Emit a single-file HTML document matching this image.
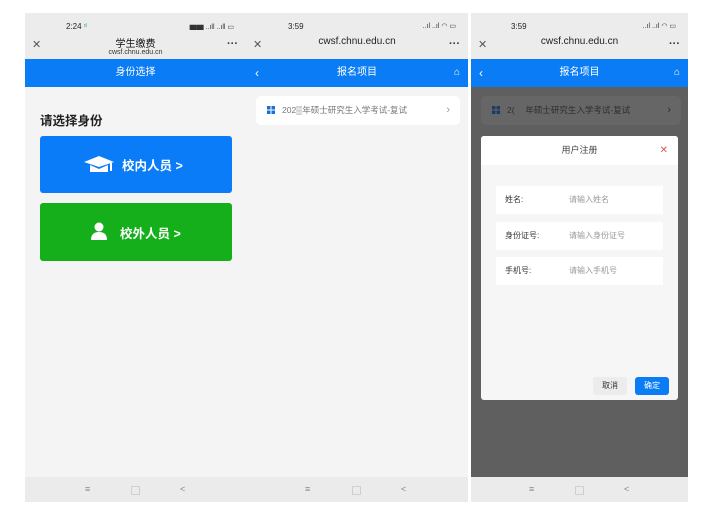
<!DOCTYPE html>
<html><head><meta charset="utf-8"><style>
*{margin:0;padding:0;box-sizing:border-box}
body{width:703px;height:510px;background:#fff;position:relative;overflow:hidden;font-family:"Liberation Sans","Noto Sans CJK SC",sans-serif}
.p{position:absolute;top:13px;height:489px;background:#f4f4f4;overflow:hidden}
.hd{position:absolute;left:0;right:0;top:0;height:46px;background:#ececec}
.tm{position:absolute;top:9px;font-size:8px;color:#222}
.sig{position:absolute;top:9px;font-size:7px;color:#333;letter-spacing:0}
.x{position:absolute;left:7px;top:27px;font-size:11px;color:#555;line-height:1}
.dots{position:absolute;right:8px;top:25px;font-size:11px;color:#333;font-weight:bold;letter-spacing:0}
.url{position:absolute;left:0;right:0;text-align:center;top:23px;font-size:10px;color:#222}
.bar{position:absolute;left:0;right:0;top:46px;height:28px;background:#0a7cf6;color:#fff;font-size:10px;text-align:center;line-height:28px}
.nav{position:absolute;left:0;right:0;bottom:0;height:25px;background:#ebebeb;color:#888;font-size:9px}
.nav span{position:absolute;top:7px}
</style></head><body>

<!-- panel 1 -->
<div class="p" style="left:25px;width:221px">
 <div class="hd">
  <div class="tm" style="left:41px">2:24 <span style="color:#3a9">ᵈ</span></div>
  <div class="sig" style="right:12px">▆▆ ..ıll ..ıll ▭</div>
  <div class="x">✕</div>
  <div style="position:absolute;left:0;right:0;top:22px;text-align:center;font-size:10px;color:#111">学生缴费</div>
  <div style="position:absolute;left:0;right:0;top:36px;text-align:center;font-size:7px;color:#333">cwsf.chnu.edu.cn</div>
  <div class="dots">···</div>
 </div>
 <div class="bar">身份选择</div>
 <div style="position:absolute;left:15px;top:97px;font-size:12.5px;font-weight:bold;color:#222">请选择身份</div>
 <div style="position:absolute;left:15px;top:123px;width:192px;height:57px;background:#0b7cf7;border-radius:3px;color:#fff;font-size:12.5px;font-weight:bold">
  <svg style="position:absolute;left:44px;top:20px" width="30" height="16" viewBox="0 0 30 16"><path d="M0 6 L15 0 L30 6 L15 11Z" fill="#fff"/><path d="M6 9 L6 16 L24 16 L24 9 L15 13Z" fill="#fff"/><rect x="26" y="7" width="2" height="8" fill="#fff"/></svg>
  <span style="position:absolute;left:82px;top:19px">校内人员 &gt;</span>
 </div>
 <div style="position:absolute;left:15px;top:190px;width:192px;height:58px;background:#14af1b;border-radius:3px;color:#fff;font-size:12.5px;font-weight:bold">
  <svg style="position:absolute;left:51px;top:19px" width="16" height="18" viewBox="0 0 16 18"><circle cx="8" cy="5" r="4.5" fill="#fff"/><path d="M0 18 Q0 10 8 10 Q16 10 16 18Z" fill="#fff"/></svg>
  <span style="position:absolute;left:80px;top:20px">校外人员 &gt;</span>
 </div>
 <div class="nav"><span style="left:60px">≡</span><span style="left:106px">▢</span><span style="left:155px">&lt;</span></div>
</div>

<!-- panel 2 -->
<div class="p" style="left:246px;width:222px">
 <div class="hd">
  <div class="tm" style="left:42px">3:59</div>
  <div class="sig" style="right:12px">..ıl ..ıl ◠ ▭</div>
  <div class="x">✕</div>
  <div class="url">cwsf.chnu.edu.cn</div>
  <div class="dots">···</div>
 </div>
 <div class="bar"><span style="position:absolute;left:9px;font-size:12px">‹</span>报名项目<span style="position:absolute;right:8px;font-size:10px">⌂</span></div>
 <div style="position:absolute;left:10px;top:83px;width:204px;height:29px;background:#fff;border-radius:5px;font-size:8.5px;color:#777;line-height:29px">
  <svg style="position:absolute;left:11px;top:10px" width="8" height="8" viewBox="0 0 8 8"><rect width="3.5" height="3.5" fill="#1a6fd8"/><rect x="4.5" width="3.5" height="3.5" fill="#1a6fd8"/><rect y="4.5" width="3.5" height="3.5" fill="#1a6fd8"/><rect x="4.5" y="4.5" width="3.5" height="3.5" fill="#1a6fd8"/></svg>
  <span style="position:absolute;left:26px">202▒年硕士研究生入学考试-复试</span>
  <span style="position:absolute;right:10px;font-size:11px;color:#999">›</span>
 </div>
 <div class="nav"><span style="left:59px">≡</span><span style="left:106px">▢</span><span style="left:155px">&lt;</span></div>
</div>

<!-- panel 3 -->
<div class="p" style="left:471px;width:217px;background:#5f5f5f">
 <div class="hd">
  <div class="tm" style="left:40px">3:59</div>
  <div class="sig" style="right:12px">..ıl ..ıl ◠ ▭</div>
  <div class="x">✕</div>
  <div class="url">cwsf.chnu.edu.cn</div>
  <div class="dots">···</div>
 </div>
 <div class="bar"><span style="position:absolute;left:8px;font-size:12px">‹</span>报名项目<span style="position:absolute;right:8px;font-size:10px">⌂</span></div>
 <div style="position:absolute;left:10px;top:83px;width:200px;height:29px;background:#666;border-radius:5px;font-size:8.5px;color:#2e2e2e;line-height:29px">
  <svg style="position:absolute;left:11px;top:10px" width="8" height="8" viewBox="0 0 8 8"><rect width="3.5" height="3.5" fill="#1b3c66"/><rect x="4.5" width="3.5" height="3.5" fill="#1b3c66"/><rect y="4.5" width="3.5" height="3.5" fill="#1b3c66"/><rect x="4.5" y="4.5" width="3.5" height="3.5" fill="#1b3c66"/></svg>
  <span style="position:absolute;left:26px">2(　 年硕士研究生入学考试-复试</span>
  <span style="position:absolute;right:10px;font-size:11px">›</span>
 </div>
 <div style="position:absolute;left:10px;top:123px;width:197px;height:264px;background:#f6f6f6;border-radius:3px;overflow:hidden">
  <div style="height:29px;background:#fff;text-align:center;line-height:29px;font-size:9px;color:#444">用户注册<span style="position:absolute;right:10px;color:#d55;font-size:10px">✕</span></div>
  <div style="position:absolute;left:15px;top:50px;width:167px;height:28px;background:#fff;font-size:8px;line-height:28px;color:#333"><span style="position:absolute;left:9px">姓名:</span><span style="position:absolute;left:73px;color:#999">请输入姓名</span></div>
  <div style="position:absolute;left:15px;top:86px;width:167px;height:28px;background:#fff;font-size:8px;line-height:28px;color:#333"><span style="position:absolute;left:9px">身份证号:</span><span style="position:absolute;left:73px;color:#999">请输入身份证号</span></div>
  <div style="position:absolute;left:15px;top:121px;width:167px;height:28px;background:#fff;font-size:8px;line-height:28px;color:#333"><span style="position:absolute;left:9px">手机号:</span><span style="position:absolute;left:73px;color:#999">请输入手机号</span></div>
  <div style="position:absolute;left:112px;top:241px;width:34px;height:18px;background:#ececec;border-radius:3px;font-size:8px;text-align:center;line-height:18px;color:#333">取消</div>
  <div style="position:absolute;left:154px;top:241px;width:34px;height:18px;background:#0a7cf6;border-radius:3px;font-size:8px;text-align:center;line-height:18px;color:#fff">确定</div>
 </div>
 <div class="nav"><span style="left:58px">≡</span><span style="left:104px">▢</span><span style="left:153px">&lt;</span></div>
</div>
</body></html>
